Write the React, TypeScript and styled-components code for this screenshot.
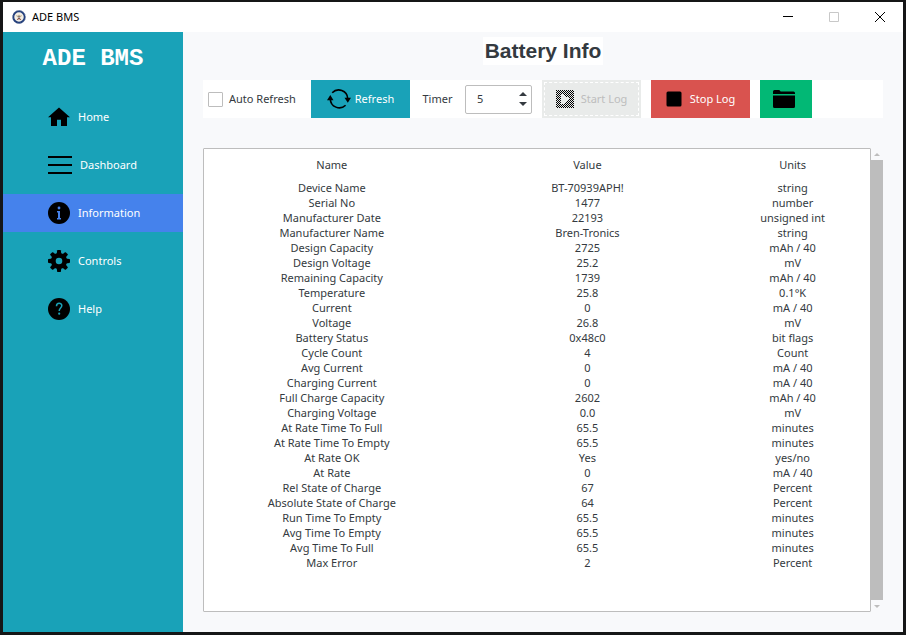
import React, { useState } from "react";
import styled, { createGlobalStyle, css } from "styled-components";

const GlobalStyle = createGlobalStyle`
  *, *::before, *::after { box-sizing: border-box; }
  body {
    margin: 0;
    background: #151617;
    font-family: "Segoe UI", "Noto Sans", sans-serif;
    font-size: 11px;
    line-height: 14px;
    color: #343a40;
  }
  button, input { font: inherit; color: inherit; }
`;

const Desktop = styled.div`
  min-height: 100vh;
  display: flex;
  padding: 2px 3px 3px;
`;

const Window = styled.div`
  flex: 1;
  min-width: 0;
  display: flex;
  flex-direction: column;
  background: #f8f9fb;
`;

const TitleBar = styled.header`
  height: 30px;
  display: flex;
  align-items: center;
  padding-left: 9px;
  background: #fff;
  color: #000;
`;

const WindowTitle = styled.span`
  flex: 1;
  padding-left: 6px;
`;

const CaptionButton = styled.button`
  width: 46px;
  height: 30px;
  display: flex;
  align-items: center;
  justify-content: center;
  padding: 0;
  border: 0;
  background: none;
`;

const Body = styled.div`
  flex: 1;
  display: flex;
`;

const Sidebar = styled.aside`
  width: 180px;
  flex: none;
  background: #19a2b8;
  color: #fff;
`;

const Brand = styled.div`
  padding: 13px 0 25px;
  font: bold 24px/28px "Courier New", "Liberation Mono", monospace;
  text-align: center;
`;

const Nav = styled.nav`
  display: flex;
  flex-direction: column;
  gap: 10px;
`;

const NavButton = styled.button<{ $active?: boolean }>`
  height: 38px;
  display: flex;
  align-items: center;
  gap: 8px;
  padding: 0 0 0 45px;
  border: 0;
  background: ${(p) => (p.$active ? "#4582ec" : "transparent")};
  color: #fff;
  text-align: left;

  svg { color: #000; }
`;

const Main = styled.main`
  flex: 1;
  min-width: 0;
  display: flex;
  flex-direction: column;
  padding: 5px 20px 20px;
`;

const Heading = styled.h1`
  align-self: center;
  margin: 0 0 15px;
  padding: 0 2px;
  background: #fff;
  font: bold 21px/28px "Liberation Sans", Arial, sans-serif;
`;

const Toolbar = styled.div`
  height: 38px;
  display: flex;
  align-items: center;
  gap: 10px;
  margin-bottom: 30px;
  background: #fff;
`;

const CheckLabel = styled.label`
  min-width: 98px;
  display: flex;
  align-items: center;
  gap: 6px;
  padding-left: 5px;
  white-space: nowrap;
`;

const CheckBox = styled.input`
  appearance: none;
  width: 15px;
  height: 15px;
  margin: 0;
  border: 1px solid #bdbdbd;
  border-radius: 1px;
  background: #fff;

  &:checked { background: #4582ec; }
`;

const tones = {
  info: css`background: #19a2b8; color: #fff;`,
  danger: css`background: #d9534f; color: #fff;`,
  success: css`background: #02b875; color: #fff;`,
  disabled: css`
    background: #e9ebea;
    color: #bdbdbd;
    outline: 1px dashed #fff;
    outline-offset: -3px;
  `,
};

const ToolButton = styled.button<{ $tone: keyof typeof tones; $gap?: number; $compact?: boolean }>`
  width: ${(p) => (p.$compact ? 52 : 99)}px;
  height: 38px;
  flex: none;
  display: flex;
  align-items: center;
  justify-content: center;
  gap: ${(p) => p.$gap ?? 0}px;
  padding: 0 ${(p) => (p.$compact ? 4 : 0)}px 0 0;
  border: 0;
  white-space: nowrap;
  ${(p) => tones[p.$tone]}

  svg { color: #000; }
`;

const TimerLabel = styled.label`
  min-width: 35px;
  text-align: center;
`;

const Spinner = styled.div`
  width: 67px;
  height: 29px;
  display: flex;
  border: 1px solid #bdbdbd;
  border-radius: 2px;
`;

const SpinnerInput = styled.input`
  flex: 1;
  min-width: 0;
  padding: 0 0 0 11px;
  border: 0;
  background: none;
  appearance: textfield;
  outline: 0;

  &::-webkit-inner-spin-button { display: none; }
`;

const SpinnerArrows = styled.div`
  width: 16px;
  display: flex;
  flex-direction: column;
  padding: 4px 0;
`;

const ArrowButton = styled.button`
  flex: 1;
  display: flex;
  align-items: center;
  justify-content: center;
  padding: 0;
  border: 0;
  background: none;
`;

const TablePanel = styled.section`
  flex: 1;
  display: flex;
`;

const TableFrame = styled.div`
  flex: 1;
  min-width: 0;
  border: 1px solid #bdbdbd;
  border-radius: 1px;
  background: #fff;
`;

const Table = styled.table`
  width: 100%;
  table-layout: fixed;
  border-collapse: collapse;
  text-align: center;
`;

const HeadCell = styled.th<{ $share: number }>`
  width: ${(p) => p.$share}%;
  height: 31px;
  padding: 0;
  font-weight: 400;
`;

const Cell = styled.td`
  height: 15px;
  padding: 0;
`;

const ScrollBar = styled.div`
  width: 12px;
  display: flex;
  flex-direction: column;
  color: #bdbdbd;
`;

const ScrollArrow = styled.button`
  height: 12px;
  display: flex;
  align-items: center;
  justify-content: center;
  padding: 0;
  border: 0;
  background: none;
`;

const ScrollThumb = styled.div`
  flex: 1;
  background: #bdbdbd;
`;

const Triangle = ({ down, width = 8, height = 4 }: { down?: boolean; width?: number; height?: number }) => (
  <svg width={width} height={height} viewBox="0 0 8 4" fill="currentColor" aria-hidden>
    <path d={down ? "M0 0h8L4 4z" : "M0 4h8L4 0z"} />
  </svg>
);

const LogoIcon = () => (
  <svg width="14" height="14" viewBox="0 0 14 14" aria-hidden>
    <circle cx="7" cy="7" r="5.7" fill="#f4efe6" stroke="#24407c" strokeWidth="1.9" />
    <circle cx="7" cy="7" r="6.5" fill="none" stroke="#8795b4" strokeWidth="1" strokeDasharray="1.2 1.4" />
    <path d="M3.8 5l2 .7L7 4.5l1.2 1.2 2-.7-1.5 2.3H5.3z" fill="#c1ad8c" />
    <path d="M4.8 9.4L7 7.5l2.2 1.9-.9.6L7 9l-1.3 1z" fill="#80483d" />
    <path d="M6.4 6h1.2v1.6H6.4z" fill="#526183" />
  </svg>
);

const HomeIcon = () => (
  <svg width="22" height="20" viewBox="0 0 22 20" fill="currentColor" aria-hidden>
    <path d="M11 .5L0 10.3h3V19h6v-6.2h4V19h6v-8.7h3z" />
  </svg>
);

const MenuIcon = () => (
  <svg width="24" height="18" viewBox="0 0 24 18" fill="currentColor" aria-hidden>
    <path d="M0 0h24v2H0zM0 8h24v2H0zM0 16h24v2H0z" />
  </svg>
);

const InfoIcon = () => (
  <svg width="22" height="22" viewBox="0 0 22 22" aria-hidden>
    <circle cx="11" cy="11" r="11" fill="#000" />
    <circle cx="11" cy="6" r="1.4" fill="#4582ec" />
    <path d="M9 9h3v7h1v1.4H9V16h1v-5.6H9z" fill="#4582ec" />
  </svg>
);

const gearTeeth = [0, 45, 90, 135, 180, 225, 270, 315];

const GearIcon = () => (
  <svg width="22" height="22" viewBox="0 0 22 22" fill="currentColor" aria-hidden>
    <circle cx="11" cy="11" r="5.7" fill="none" stroke="currentColor" strokeWidth="4.8" />
    {gearTeeth.map((angle) => (
      <path key={angle} d="M8.6 4.5L9.1.6Q9.2 0 9.9 0h2.2q.7 0 .8.6l.5 3.9z" transform={`rotate(${angle} 11 11)`} />
    ))}
  </svg>
);

const HelpIcon = () => (
  <svg width="22" height="22" viewBox="0 0 22 22" aria-hidden>
    <circle cx="11" cy="11" r="11" fill="#000" />
    <path
      d="M8.5 8.2c0-4 5.3-3.6 5.3-.6 0 2.5-2.6 2.4-2.6 5.3"
      fill="none"
      stroke="#19a2b8"
      strokeWidth="1.5"
    />
    <circle cx="11.2" cy="15.7" r="1.1" fill="#19a2b8" />
  </svg>
);

const RefreshIcon = () => (
  <svg width="24" height="20" viewBox="0 0 24 20" fill="none" stroke="currentColor" strokeWidth="1.6" aria-hidden>
    <path d="M5.2 3.8A9 9 0 0 1 20.7 9.5M18.6 16.2A9 9 0 0 1 3.3 10" />
    <path d="M17.5 8.7H24l-3.2 5zM0 11.2h6.5L3.3 6z" fill="currentColor" stroke="none" />
  </svg>
);

const StartIcon = () => (
  <svg width="18" height="18" viewBox="0 0 18 18" shapeRendering="crispEdges" aria-hidden>
    <defs>
      <pattern id="stipple" width="2" height="2" patternUnits="userSpaceOnUse">
        <path d="M0 0h1v1H0zM1 1h1v1H1z" fill="#000" />
      </pattern>
    </defs>
    <path fillRule="evenodd" d="M0 0h18v18H0zM5 4v10h2l7-5-7-5z" fill="url(#stipple)" />
  </svg>
);

const StopIcon = () => (
  <svg width="16" height="16" viewBox="0 0 16 16" fill="currentColor" aria-hidden>
    <rect x="0.5" y="0.5" width="15" height="15" rx="1.5" />
  </svg>
);

const FolderIcon = () => (
  <svg width="22" height="18" viewBox="0 0 22 18" fill="currentColor" aria-hidden>
    <path d="M0 4V1.5Q0 0 1.5 0H6q1 0 1.6 1.5h12.9Q22 1.5 22 3v1zM0 5.5h22v11q0 1.5-1.5 1.5h-19Q0 18 0 16.5z" />
  </svg>
);

const MinimizeIcon = () => (
  <svg width="10" height="10" viewBox="0 0 10 10" aria-hidden>
    <path d="M0 4h10v1H0z" />
  </svg>
);

const MaximizeIcon = () => (
  <svg width="10" height="10" viewBox="0 0 10 10" fill="none" stroke="#c8c8c8" aria-hidden>
    <path d="M.5.5h9v9h-9z" />
  </svg>
);

const CloseIcon = () => (
  <svg width="10" height="10" viewBox="0 0 10 10" stroke="#000" aria-hidden>
    <path d="M0 0l10 10M10 0L0 10" />
  </svg>
);

const navItems = [
  { label: "Home", Icon: HomeIcon },
  { label: "Dashboard", Icon: MenuIcon },
  { label: "Information", Icon: InfoIcon },
  { label: "Controls", Icon: GearIcon },
  { label: "Help", Icon: HelpIcon },
];

const readings = [
  ["Device Name", "BT-70939APH!", "string"],
  ["Serial No", "1477", "number"],
  ["Manufacturer Date", "22193", "unsigned int"],
  ["Manufacturer Name", "Bren-Tronics", "string"],
  ["Design Capacity", "2725", "mAh / 40"],
  ["Design Voltage", "25.2", "mV"],
  ["Remaining Capacity", "1739", "mAh / 40"],
  ["Temperature", "25.8", "0.1°K"],
  ["Current", "0", "mA / 40"],
  ["Voltage", "26.8", "mV"],
  ["Battery Status", "0x48c0", "bit flags"],
  ["Cycle Count", "4", "Count"],
  ["Avg Current", "0", "mA / 40"],
  ["Charging Current", "0", "mA / 40"],
  ["Full Charge Capacity", "2602", "mAh / 40"],
  ["Charging Voltage", "0.0", "mV"],
  ["At Rate Time To Full", "65.5", "minutes"],
  ["At Rate Time To Empty", "65.5", "minutes"],
  ["At Rate OK", "Yes", "yes/no"],
  ["At Rate", "0", "mA / 40"],
  ["Rel State of Charge", "67", "Percent"],
  ["Absolute State of Charge", "64", "Percent"],
  ["Run Time To Empty", "65.5", "minutes"],
  ["Avg Time To Empty", "65.5", "minutes"],
  ["Avg Time To Full", "65.5", "minutes"],
  ["Max Error", "2", "Percent"],
];

export default function App() {
  const [timer, setTimer] = useState(5);
  const [active, setActive] = useState("Information");

  return (
    <Desktop>
      <GlobalStyle />
      <Window>
        <TitleBar>
          <LogoIcon />
          <WindowTitle>ADE BMS</WindowTitle>
          <CaptionButton aria-label="Minimize"><MinimizeIcon /></CaptionButton>
          <CaptionButton aria-label="Maximize" disabled><MaximizeIcon /></CaptionButton>
          <CaptionButton aria-label="Close"><CloseIcon /></CaptionButton>
        </TitleBar>
        <Body>
          <Sidebar>
            <Brand>ADE BMS</Brand>
            <Nav>
              {navItems.map(({ label, Icon }) => (
                <NavButton key={label} $active={label === active} onClick={() => setActive(label)}>
                  <Icon />
                  {label}
                </NavButton>
              ))}
            </Nav>
          </Sidebar>
          <Main>
            <Heading>Battery Info</Heading>
            <Toolbar>
              <CheckLabel>
                <CheckBox type="checkbox" />
                Auto Refresh
              </CheckLabel>
              <ToolButton $tone="info" $gap={4}><RefreshIcon />Refresh</ToolButton>
              <TimerLabel htmlFor="timer">Timer</TimerLabel>
              <Spinner>
                <SpinnerInput
                  id="timer"
                  type="number"
                  value={timer}
                  onChange={(e) => setTimer(Number(e.target.value))}
                />
                <SpinnerArrows>
                  <ArrowButton aria-label="Increase" onClick={() => setTimer(timer + 1)}><Triangle /></ArrowButton>
                  <ArrowButton aria-label="Decrease" onClick={() => setTimer(timer - 1)}><Triangle down /></ArrowButton>
                </SpinnerArrows>
              </Spinner>
              <ToolButton $tone="disabled" $gap={7} disabled><StartIcon />Start Log</ToolButton>
              <ToolButton $tone="danger" $gap={8}><StopIcon />Stop Log</ToolButton>
              <ToolButton $tone="success" $compact aria-label="Open folder"><FolderIcon /></ToolButton>
            </Toolbar>
            <TablePanel>
              <TableFrame>
                <Table>
                  <thead>
                    <tr>
                      <HeadCell $share={38}>Name</HeadCell>
                      <HeadCell $share={38}>Value</HeadCell>
                      <HeadCell $share={23}>Units</HeadCell>
                    </tr>
                  </thead>
                  <tbody>
                    {readings.map(([name, value, unit]) => (
                      <tr key={name}>
                        <Cell>{name}</Cell>
                        <Cell>{value}</Cell>
                        <Cell>{unit}</Cell>
                      </tr>
                    ))}
                  </tbody>
                </Table>
              </TableFrame>
              <ScrollBar>
                <ScrollArrow aria-label="Scroll up"><Triangle width={6} height={3} /></ScrollArrow>
                <ScrollThumb />
                <ScrollArrow aria-label="Scroll down"><Triangle down width={6} height={3} /></ScrollArrow>
              </ScrollBar>
            </TablePanel>
          </Main>
        </Body>
      </Window>
    </Desktop>
  );
}
